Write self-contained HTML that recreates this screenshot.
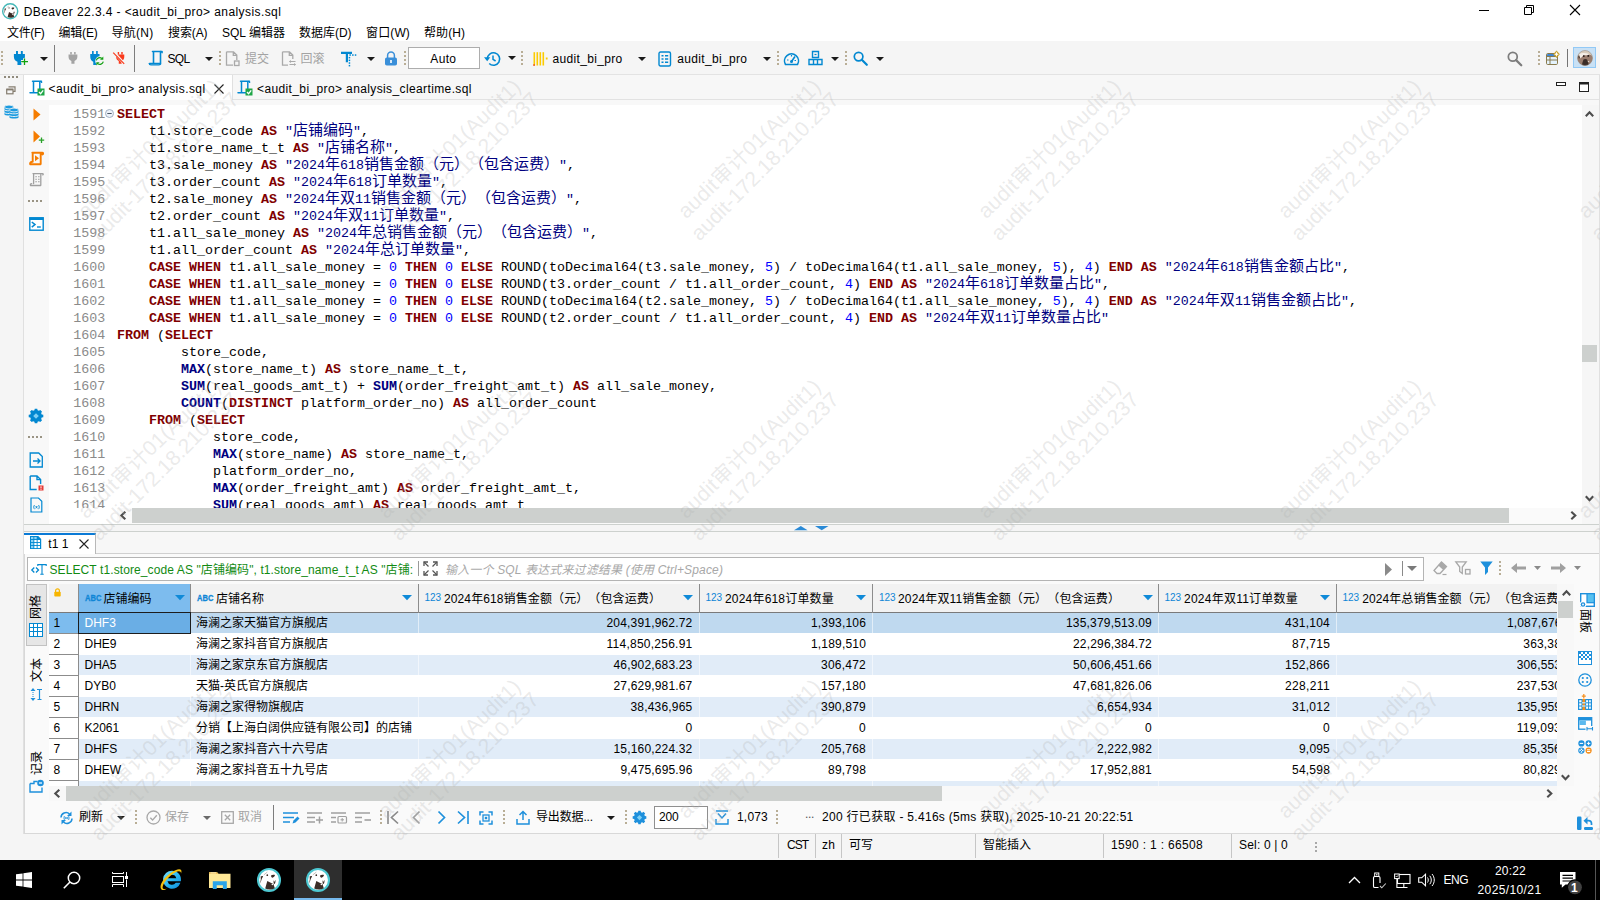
<!DOCTYPE html>
<html lang="zh-CN"><head><meta charset="utf-8"><title>DBeaver 22.3.4 - &lt;audit_bi_pro&gt; analysis.sql</title>
<style>
html,body{margin:0;padding:0;}
body{text-spacing-trim:space-all;width:1600px;height:900px;overflow:hidden;position:relative;background:#f5f5f5;font-family:"Liberation Sans","Noto Sans CJK SC",sans-serif;font-size:12px;color:#000;}
.a{position:absolute;box-sizing:border-box;}
.t{position:absolute;white-space:nowrap;line-height:16px;}
.p{display:inline-block;width:0;height:0;}
svg{position:absolute;overflow:visible;}
svg.wmk{overflow:hidden;pointer-events:none;}
.code{position:absolute;white-space:pre;font-family:"Liberation Mono","Noto Sans CJK SC",monospace;font-size:13.333px;line-height:17px;height:17px;left:117px;color:#000;}
.code .cj{font-family:"Noto Sans CJK SC","Liberation Sans",sans-serif;font-size:15px;line-height:0;}
.code .k{color:#800000;}
.code .f{color:#000080;}
.code .s{color:#000080;}
.code .n{color:#0000ff;}
.ln{position:absolute;font-family:"Liberation Mono",monospace;font-size:13.333px;line-height:17px;height:17px;left:72px;color:#8a8a8a;}
</style></head><body>
<div class="a " style="left:0px;top:0px;width:1600px;height:22px;background:#fff;"></div>
<svg style="left:1.8px;top:2.8px" width="16.4" height="16.4" viewBox="0 0 24 24"><circle cx="12" cy="12" r="11" fill="#fff" stroke="#45b8b8" stroke-width="2.100"/><path d="M3.600 8.600c.8-.9 2-.8 2.500-.2c-.9 1.200-1.300 2.400-1.700 3.700c-.3 1.300-.6 2.500-1.200 3.500c0-1.500.5-2.900.6-4.200c.1-1-.1-1.900-.2-2.800z" fill="#3b2d27"/><path d="M6.800 6.900L10.300 4.100" stroke="#8a807a" stroke-width=".5"/><circle cx="10.300" cy="7.200" r=".85" fill="#3b2d27"/><path d="M14 7.400c1.200-.8 2.900-.9 4-.3c-.3 1.300-1.300 2.500-2.500 2.600c-.9-.3-1.500-1.300-1.500-2.300z" fill="#3b2d27"/><path d="M16.200 11.800l.9 2.300l1.300-2.200c.3 1.400 0 3-.9 4.200l-.7-.4z" fill="#3b2d27"/><path d="M10.300 13.100c1.300.8 2.600 1.400 3.900 1.800l2.200 1l1.400 4.300c-1.600 1-3.300 1.500-5 1.400c-1.700-.1-3.300-.5-4.600-1z" fill="#3b2d27"/><circle cx="15.300" cy="16.400" r=".75" fill="#fff"/></svg>
<svg style="left:1477px;top:3px" width="14" height="14" viewBox="0 0 14 14"><path d="M2 7.500h10" stroke="#000" stroke-width="1" fill="none"/></svg>
<svg style="left:1522px;top:3px" width="14" height="14" viewBox="0 0 14 14"><path d="M2.500 4.500h7v7h-7z M4.500 4.500v-2h7v7h-2" stroke="#000" stroke-width="1" fill="none"/></svg>
<svg style="left:1568px;top:3px" width="14" height="14" viewBox="0 0 14 14"><path d="M2 2l10 10M12 2L2 12" stroke="#000" stroke-width="1.1" fill="none"/></svg>
<div class="a " style="left:0px;top:22px;width:1600px;height:19px;background:#fff;"></div>
<div class="a " style="left:0px;top:41px;width:1600px;height:33px;background:#f5f5f5;"></div>
<div class="a " style="left:0px;top:74px;width:1600px;height:1px;background:#e3e3e3;"></div>
<svg style="left:1px;top:51px" width="2" height="16" viewBox="0 0 2 16"><rect x="0" y="0" width="2" height="2" fill="#b9ae96"/><rect x="0" y="4" width="2" height="2" fill="#b9ae96"/><rect x="0" y="8" width="2" height="2" fill="#b9ae96"/><rect x="0" y="12" width="2" height="2" fill="#b9ae96"/></svg>
<svg style="left:13px;top:50px" width="16" height="16" viewBox="0 0 16 16"><g transform="translate(0.6 1) scale(0.966667 1)"><path d="M2.500 0h2v3.200h-2zM7.500 0h2v3.200h-2z" fill="#0288d1"/><path d="M.3 3h11.400v2.800c0 2.600-1.500 4.300-3.700 4.900V14H4V10.700C1.800 10.100 .3 8.400 .3 5.800z" fill="#0288d1"/></g><path d="M11.500 8.200v6.800M8 11.600h7" stroke="#f5f5f5" stroke-width="3"/><path d="M11.500 8.400v6.600M8.200 11.700h6.800" stroke="#0fa30f" stroke-width="1.300"/></svg>
<svg style="left:40px;top:56.7px" width="8" height="4" viewBox="0 0 8 4"><path d="M0 0h8L4 4z" fill="#1a1a1a"/></svg>
<div class="a " style="left:54px;top:45px;width:1px;height:27px;background:#7d7d7d;"></div>
<svg style="left:65.5px;top:50px" width="16" height="16" viewBox="0 0 16 16"><g transform="translate(2.3 1.9) scale(0.775 0.842857)"><path d="M2.500 0h2v3.200h-2zM7.500 0h2v3.200h-2z" fill="#a3a3a3"/><path d="M.3 3h11.400v2.800c0 2.600-1.500 4.300-3.700 4.900V14H4V10.700C1.800 10.100 .3 8.400 .3 5.800z" fill="#a3a3a3"/></g></svg>
<svg style="left:88px;top:50px" width="16" height="16" viewBox="0 0 16 16"><g transform="translate(2 1) scale(0.816667 1)"><path d="M2.500 0h2v3.200h-2zM7.500 0h2v3.200h-2z" fill="#0288d1"/><path d="M.3 3h11.400v2.800c0 2.600-1.500 4.300-3.700 4.900V14H4V10.700C1.800 10.100 .3 8.400 .3 5.800z" fill="#0288d1"/></g><circle cx="11.800" cy="10.900" r="4.600" fill="#f5f5f5"/><path d="M8.300 10.400a3.500 3.500 0 0 1 5.600-2" stroke="#12a012" stroke-width="1.200" fill="none"/><path d="M15.300 6.400v3.300H12z" fill="#12a012"/><path d="M15.300 11.600a3.500 3.500 0 0 1-5.600 2" stroke="#12a012" stroke-width="1.200" fill="none"/><path d="M8.300 15.600v-3.300h3.300z" fill="#12a012"/></svg>
<svg style="left:111.5px;top:50px" width="16" height="16" viewBox="0 0 16 16"><g transform="translate(3.9 1.9) scale(0.716667 0.842857)"><path d="M2.500 0h2v3.200h-2zM7.500 0h2v3.200h-2z" fill="#f93a1c"/><path d="M.3 3h11.400v2.800c0 2.600-1.500 4.300-3.700 4.900V14H4V10.700C1.800 10.100 .3 8.400 .3 5.800z" fill="#f93a1c"/></g><path d="M1.800 2l10.800 12.200" stroke="#f5f5f5" stroke-width="2.600"/><path d="M1.200 2.600l11 11.200" stroke="#f93a1c" stroke-width="1.200"/></svg>
<div class="a " style="left:134px;top:45px;width:1px;height:27px;background:#7d7d7d;"></div>
<svg style="left:147.5px;top:50px" width="16" height="16" viewBox="0 0 16 16"><path d="M4.500 1.500h9.500M5.500 1.500v11.500M12.500 2v12M1.500 13.500h11" stroke="#0288d1" stroke-width="1.600" fill="none" stroke-linecap="round"/><path d="M12.300 1.500c1.400 0 2 .6 2 1.800" stroke="#0288d1" stroke-width="1.300" fill="none"/><path d="M1.200 13.200c0 1 .6 1.600 1.800 1.600h8c1 0 1.500-.6 1.500-1.600" stroke="#0288d1" stroke-width="1.300" fill="none"/></svg>
<svg style="left:204.5px;top:56.7px" width="8" height="4" viewBox="0 0 8 4"><path d="M0 0h8L4 4z" fill="#1a1a1a"/></svg>
<svg style="left:218.5px;top:51px" width="2" height="16" viewBox="0 0 2 16"><rect x="0" y="0" width="2" height="2" fill="#b9ae96"/><rect x="0" y="4" width="2" height="2" fill="#b9ae96"/><rect x="0" y="8" width="2" height="2" fill="#b9ae96"/><rect x="0" y="12" width="2" height="2" fill="#b9ae96"/></svg>
<svg style="left:225px;top:50.5px" width="16" height="16" viewBox="0 0 16 16"><path d="M1.500 .8h7l3.300 3.300V9M1.500 .8v13.400h6.500M8.300 .8v3.500h3.500" stroke="#a9a9a9" stroke-width="1.300" fill="none"/><rect x="9.500" y="10" width="4.500" height="4.500" fill="none" stroke="#a9a9a9" stroke-width="1.300"/></svg>
<svg style="left:281px;top:50.5px" width="16" height="16" viewBox="0 0 16 16"><path d="M1.500 .8h7l3.300 3.300V8M1.500 .8v13.400h5.500M8.300 .8v3.500h3.500" stroke="#a9a9a9" stroke-width="1.300" fill="none"/><path d="M8.500 10.500h6M8.500 13.500h6" stroke="#a9a9a9" stroke-width="1.200"/><path d="M10 9l-2 1.500l2 1.500zM13 12l2 1.500l-2 1.500z" fill="#a9a9a9"/></svg>
<svg style="left:341px;top:51px" width="16" height="16" viewBox="0 0 16 16"><path d="M0 .7h11v2.200H7V11.200H4.800V2.900H0z" fill="#0288d1"/><rect x="8.4" y="3.300" width="1.500" height="1.500" fill="#0288d1"/><rect x="11.1" y="3.300" width="1.500" height="1.500" fill="#0288d1"/><rect x="13.8" y="3.300" width="1.500" height="1.500" fill="#0288d1"/><rect x="7.700" y="5.9" width="1.500" height="1.500" fill="#0288d1"/><rect x="7.700" y="8.6" width="1.500" height="1.500" fill="#0288d1"/><rect x="7.700" y="11.3" width="1.500" height="1.500" fill="#0288d1"/><rect x="7.700" y="13.9" width="1.500" height="1.500" fill="#0288d1"/></svg>
<svg style="left:366.5px;top:56.7px" width="8" height="4" viewBox="0 0 8 4"><path d="M0 0h8L4 4z" fill="#1a1a1a"/></svg>
<svg style="left:384px;top:50.5px" width="14" height="15" viewBox="0 0 14 15"><path d="M3.600 7V4.500a3.400 3.400 0 0 1 6.800 0V7" stroke="#3a8fd9" stroke-width="1.500" fill="none"/><rect x="1" y="6.500" width="12" height="8" rx="1.800" fill="#3a8fd9"/><rect x="6.200" y="9" width="1.600" height="3" fill="#fff"/></svg>
<svg style="left:404px;top:51px" width="2" height="16" viewBox="0 0 2 16"><rect x="0" y="0" width="2" height="2" fill="#b9ae96"/><rect x="0" y="4" width="2" height="2" fill="#b9ae96"/><rect x="0" y="8" width="2" height="2" fill="#b9ae96"/><rect x="0" y="12" width="2" height="2" fill="#b9ae96"/></svg>
<div class="a " style="left:408px;top:47px;width:72px;height:22px;background:#fff;border:1px solid #adadad;"></div>
<svg style="left:484px;top:50.5px" width="17" height="16" viewBox="0 0 17 16"><path d="M3.300 8A6.200 6.200 0 1 1 5.200 12.500" stroke="#0288d1" stroke-width="1.600" fill="none"/><path d="M0 6.300h6.300L3.200 10.200z" fill="#0288d1"/><path d="M9 4.500V8.300l2.600 1.700" stroke="#0288d1" stroke-width="1.500" fill="none"/></svg>
<svg style="left:507.5px;top:56.2px" width="8" height="4" viewBox="0 0 8 4"><path d="M0 0h8L4 4z" fill="#1a1a1a"/></svg>
<svg style="left:521px;top:51px" width="2" height="16" viewBox="0 0 2 16"><rect x="0" y="0" width="2" height="2" fill="#b9ae96"/><rect x="0" y="4" width="2" height="2" fill="#b9ae96"/><rect x="0" y="8" width="2" height="2" fill="#b9ae96"/><rect x="0" y="12" width="2" height="2" fill="#b9ae96"/></svg>
<svg style="left:532.5px;top:50.5px" width="16" height="16" viewBox="0 0 16 16"><rect x="0.5" y="1.200" width="1.600" height="13.300" fill="#fccb00"/><rect x="3.5" y="1.200" width="1.600" height="13.300" fill="#fccb00"/><rect x="6.5" y="1.200" width="1.600" height="13.300" fill="#fccb00"/><rect x="9.5" y="1.200" width="1.600" height="13.300" fill="#fccb00"/><rect x="12.800" y="6.500" width="1.800" height="2" fill="#fccb00"/><rect x=".3" y="13.300" width="1.500" height="1.500" fill="#f03a17"/></svg>
<svg style="left:637.5px;top:56.7px" width="8" height="4" viewBox="0 0 8 4"><path d="M0 0h8L4 4z" fill="#1a1a1a"/></svg>
<svg style="left:658px;top:50.5px" width="14" height="16" viewBox="0 0 14 16"><rect x="1" y="1" width="11.500" height="14" rx="1.500" fill="none" stroke="#0288d1" stroke-width="1.400"/><path d="M3.500 4.800h2M7 4.800h3.200M3.500 8h2M7 8h3.200M3.500 11.200h2M7 11.200h3.200" stroke="#0288d1" stroke-width="1.400"/></svg>
<svg style="left:762.5px;top:56.7px" width="8" height="4" viewBox="0 0 8 4"><path d="M0 0h8L4 4z" fill="#1a1a1a"/></svg>
<svg style="left:776.5px;top:51px" width="2" height="16" viewBox="0 0 2 16"><rect x="0" y="0" width="2" height="2" fill="#b9ae96"/><rect x="0" y="4" width="2" height="2" fill="#b9ae96"/><rect x="0" y="8" width="2" height="2" fill="#b9ae96"/><rect x="0" y="12" width="2" height="2" fill="#b9ae96"/></svg>
<svg style="left:782.5px;top:51px" width="17" height="15" viewBox="0 0 17 15"><path d="M2.500 13.500A7 7 0 1 1 14.500 13.500z" fill="none" stroke="#0288d1" stroke-width="1.600"/><path d="M8.500 10.500L12 5.500" stroke="#0288d1" stroke-width="1.600"/><circle cx="8.500" cy="10.500" r="1.500" fill="#0288d1"/><path d="M4 9h1.500M8.500 4v1.500M11.500 9.500H13" stroke="#0288d1" stroke-width="1.200"/></svg>
<svg style="left:807.5px;top:50px" width="15" height="16" viewBox="0 0 15 16"><path d="M4.500 1.500h6v6h-6z" fill="none" stroke="#0288d1" stroke-width="1.400"/><path d="M1 14.500V9.500h13v5z M5.500 9.500v5M9.500 9.500v5" fill="none" stroke="#0288d1" stroke-width="1.400"/><path d="M6.500 4.500h2" stroke="#0288d1" stroke-width="1.200"/></svg>
<svg style="left:830.5px;top:56.7px" width="8" height="4" viewBox="0 0 8 4"><path d="M0 0h8L4 4z" fill="#1a1a1a"/></svg>
<svg style="left:844.5px;top:51px" width="2" height="16" viewBox="0 0 2 16"><rect x="0" y="0" width="2" height="2" fill="#b9ae96"/><rect x="0" y="4" width="2" height="2" fill="#b9ae96"/><rect x="0" y="8" width="2" height="2" fill="#b9ae96"/><rect x="0" y="12" width="2" height="2" fill="#b9ae96"/></svg>
<svg style="left:853px;top:51px" width="15" height="15" viewBox="0 0 15 15"><circle cx="5.600" cy="5.600" r="4.300" fill="none" stroke="#0288d1" stroke-width="1.700"/><path d="M8.800 8.800l5 5" stroke="#0288d1" stroke-width="2.200" stroke-linecap="round"/></svg>
<svg style="left:875.5px;top:56.7px" width="8" height="4" viewBox="0 0 8 4"><path d="M0 0h8L4 4z" fill="#1a1a1a"/></svg>
<svg style="left:1507px;top:50.5px" width="15.5" height="15.5" viewBox="0 0 15 15"><circle cx="5.600" cy="5.600" r="4.300" fill="none" stroke="#7d7d7d" stroke-width="1.700"/><path d="M8.800 8.800l5 5" stroke="#7d7d7d" stroke-width="2.200" stroke-linecap="round"/></svg>
<svg style="left:1537.5px;top:51px" width="2" height="16" viewBox="0 0 2 16"><rect x="0" y="0" width="2" height="2" fill="#b9ae96"/><rect x="0" y="4" width="2" height="2" fill="#b9ae96"/><rect x="0" y="8" width="2" height="2" fill="#b9ae96"/><rect x="0" y="12" width="2" height="2" fill="#b9ae96"/></svg>
<svg style="left:1545px;top:50px" width="16" height="16" viewBox="0 0 16 16"><rect x="1.500" y="3.500" width="11" height="11" rx="1.200" fill="#e4f3fd" stroke="#8a7b4e" stroke-width="1"/><path d="M1.500 6.500h11M1.500 10h11M5 6.500v8" stroke="#8a7b4e" stroke-width="1"/><path d="M2 4.800c0-.5.300-.8.800-.8h8.400c.5 0 .8.300.8.800V6H2z" fill="#3f86d2"/><path d="M11.500 .5l3.300 3.700l-3.300 3.700l-3.300-3.700z" fill="#c7a12a"/><path d="M11.500 1.600l.7 1.800l1.700.8l-1.700.8l-.7 1.800l-.7-1.800l-1.700-.8l1.700-.8z" fill="#fff"/></svg>
<div class="a " style="left:1567px;top:49px;width:1px;height:18px;background:#747474;"></div>
<div class="a " style="left:1573px;top:47px;width:23px;height:21px;background:#c9e1f5;border:1px solid #92c9f6;"></div>
<svg style="left:1577px;top:50px" width="16" height="16" viewBox="0 0 16 16"><defs><clipPath id="avc"><circle cx="8" cy="8" r="7.500"/></clipPath></defs><g clip-path="url(#avc)"><rect width="16" height="16" fill="#d8ccbc"/><path d="M0 6.500C2 4.500 4 4 6 5l4-.3c2-.6 4 0 6 1.800V16H0z" fill="#9a7e6f"/><path d="M2 4.500C4.500 2.800 8 2.600 12.500 4.300L10 5.300 6.500 5.200 3.500 8.500z" fill="#f4efe8"/><path d="M6.500 9.500c1-.8 2.500-.8 3.600 0l1.200 3.500c.6 1 .2 2.500-.5 3H6c-.8-1-1-2-.6-3.200z" fill="#3a2c27"/><circle cx="6.800" cy="6.100" r=".9" fill="#1d1512"/><circle cx="11.300" cy="5.900" r=".9" fill="#1d1512"/><path d="M1.200 5.800l1.600 1.200-.8 2z" fill="#2d221e"/><path d="M10.500 11.500l1.500-.5.300 1.300z" fill="#f4efe8"/></g><circle cx="8" cy="8" r="7.500" fill="none" stroke="#8c8177" stroke-width=".5"/></svg>
<div class="a " style="left:0px;top:75px;width:1600px;height:785px;background:#f5f5f5;"></div>
<div class="a " style="left:23px;top:75px;width:1px;height:785px;background:#e0e0e0;"></div>
<svg style="left:4px;top:76px" width="16" height="2" viewBox="0 0 16 2"><rect x="0" y="0" width="2" height="2" fill="#8f8a7c"/><rect x="4" y="0" width="2" height="2" fill="#8f8a7c"/><rect x="8" y="0" width="2" height="2" fill="#8f8a7c"/><rect x="12" y="0" width="2" height="2" fill="#8f8a7c"/></svg>
<svg style="left:6px;top:86px" width="10" height="9" viewBox="0 0 10 9"><path d="M2.500 .8h6.500v4.500h-2" fill="none" stroke="#857d70" stroke-width="1.200"/><rect x=".7" y="3.200" width="6.300" height="4.600" fill="#f5f5f5" stroke="#857d70" stroke-width="1.200"/><path d="M.7 3.600h6.300" stroke="#857d70" stroke-width="1.600"/></svg>
<svg style="left:4px;top:104px" width="16" height="16" viewBox="0 0 16 16"><path d="M0.5 3v7.500c0 1.400 9 1.400 9 0v-7.500" fill="#1b9be0"/><ellipse cx="5.0" cy="3" rx="4.5" ry="1.900" fill="#1b9be0" stroke="#f5f5f5" stroke-width=".8"/><path d="M0.5 5.7c0 1.500 9 1.500 9 0M0.5 8.4c0 1.500 9 1.500 9 0" stroke="#f5f5f5" stroke-width=".9" fill="none"/><path d="M5.5 6v7.500c0 1.400 9 1.400 9 0v-7.500" fill="#1b9be0"/><ellipse cx="10.0" cy="6" rx="4.5" ry="1.900" fill="#1b9be0" stroke="#f5f5f5" stroke-width=".8"/><path d="M5.5 8.7c0 1.500 9 1.500 9 0M5.5 11.4c0 1.500 9 1.500 9 0" stroke="#f5f5f5" stroke-width=".9" fill="none"/></svg>
<div class="a " style="left:24px;top:75px;width:1575px;height:25px;background:#f7f7f7;"></div>
<div class="a " style="left:24px;top:99px;width:1575px;height:1px;background:#e2e2e2;"></div>
<div class="a " style="left:24px;top:75px;width:209px;height:25px;background:#fff;border-right:1px solid #e0e0e0;"></div>
<svg style="left:29px;top:80px" width="16" height="16" viewBox="0 0 16 16"><path d="M3.500 1.300h9M4.500 1.500v10.500M10.800 2v7M1 12.800h8" stroke="#0288d1" stroke-width="1.500" fill="none" stroke-linecap="round"/><path d="M11 1.300c1.200 0 1.800.5 1.800 1.700" stroke="#0288d1" stroke-width="1.200" fill="none"/><rect x="8.500" y="8.500" width="7" height="7" fill="#1fa647"/><path d="M10 12l1.600 1.700l2.600-3.300" stroke="#fff" stroke-width="1.300" fill="none"/></svg>
<svg style="left:214px;top:84px" width="10" height="10" viewBox="0 0 10 10"><path d="M.5 .5l9 9M9.500 .5l-9 9" stroke="#222" stroke-width="1.100"/></svg>
<svg style="left:237px;top:80px" width="16" height="16" viewBox="0 0 16 16"><path d="M3.500 1.300h9M4.500 1.500v10.500M10.800 2v7M1 12.800h8" stroke="#0288d1" stroke-width="1.500" fill="none" stroke-linecap="round"/><path d="M11 1.300c1.200 0 1.800.5 1.800 1.700" stroke="#0288d1" stroke-width="1.200" fill="none"/><rect x="8.500" y="8.500" width="7" height="7" fill="#1fa647"/><path d="M10 12l1.600 1.700l2.600-3.300" stroke="#fff" stroke-width="1.300" fill="none"/></svg>
<svg style="left:1556px;top:82px" width="10" height="4" viewBox="0 0 10 4"><rect x=".5" y=".5" width="9" height="3" fill="#fff" stroke="#222" stroke-width="1"/></svg>
<svg style="left:1579px;top:82px" width="10" height="10" viewBox="0 0 10 10"><rect x=".5" y=".5" width="9" height="9" fill="#fff" stroke="#222" stroke-width="1"/><rect x=".5" y=".5" width="9" height="2" fill="#222"/></svg>
<div class="a " style="left:24px;top:100px;width:1575px;height:5px;background:#f8f8f8;"></div>
<div class="a " style="left:24px;top:105px;width:25px;height:419px;background:#f8f8f8;"></div>
<div class="a " style="left:49px;top:105px;width:1533px;height:403px;background:#fff;"></div>
<div class="a " style="left:49px;top:508px;width:68px;height:16px;background:#fff;"></div>
<svg style="left:32.5px;top:107.5px" width="8" height="13" viewBox="0 0 8 13"><path d="M0.500 0.500l7 6l-7 6z" fill="#f57c00"/></svg>
<svg style="left:32.5px;top:129.5px" width="12" height="14" viewBox="0 0 12 14"><path d="M0.500 0.500l6.500 6l-6.500 6z" fill="#f57c00"/><path d="M8.500 7.500v5.500M5.800 10.200h5.400" stroke="#2aa22a" stroke-width="1.300"/></svg>
<svg style="left:28.5px;top:150.5px" width="16" height="16" viewBox="0 0 16 16"><path d="M3.300 1.700H13.200c1.100 0 1.300 1.300 .3 1.700M3.700 1.700V10.800M11.700 3V13M1.200 13.200H11.500M1.200 13.200c-.4-1.200 .2-2.200 1.500-2.200" stroke="#f57c00" stroke-width="1.900" fill="none" stroke-linecap="round" stroke-linejoin="round"/><path d="M6 4.200l4 3l-4 3z" fill="#f57c00"/></svg>
<svg style="left:28.5px;top:172px" width="16" height="16" viewBox="0 0 16 16"><path d="M4 1.600H13.500c.9 0 1 .9 .3 1.300M4.600 1.600V11.500M11.800 2.500V13.200M1.500 13.500H11.600M1.500 13.500c-.4-1 .1-1.900 1.200-1.900" stroke="#a0a0a0" stroke-width="1.300" fill="none" stroke-linecap="round" stroke-linejoin="round"/><path d="M6.300 4.700h1.600M9 4.700h1.600M6.300 7.200h1.600M9 7.200h1.600M6.300 9.700h1.600M9 9.700h1.600" stroke="#a0a0a0" stroke-width="1.100"/></svg>
<svg style="left:28px;top:200px" width="16" height="2" viewBox="0 0 16 2"><rect x="0" y="0" width="2" height="2" fill="#9a9484"/><rect x="4" y="0" width="2" height="2" fill="#9a9484"/><rect x="8" y="0" width="2" height="2" fill="#9a9484"/><rect x="12" y="0" width="2" height="2" fill="#9a9484"/></svg>
<svg style="left:29px;top:216.5px" width="15" height="14" viewBox="0 0 15 14"><rect x=".8" y=".8" width="13.400" height="12.400" fill="#fff" stroke="#0288d1" stroke-width="1.400"/><rect x=".5" y=".5" width="14" height="2.500" fill="#0288d1"/><path d="M2.800 5l3.200 2.600L2.800 10.200" stroke="#0288d1" stroke-width="1.500" fill="none"/><path d="M8 10h3.800" stroke="#0288d1" stroke-width="1.400"/></svg>
<svg style="left:28px;top:408px" width="16" height="16" viewBox="0 0 16 16"><path d="M15.29 6.75L15.29 9.25L13.69 9.57L13.13 10.91L14.04 12.27L12.27 14.04L10.91 13.13L9.57 13.69L9.25 15.29L6.75 15.29L6.43 13.69L5.09 13.13L3.73 14.04L1.96 12.27L2.87 10.91L2.31 9.57L0.71 9.25L0.71 6.75L2.31 6.43L2.87 5.09L1.96 3.73L3.73 1.96L5.09 2.87L6.43 2.31L6.75 0.71L9.25 0.71L9.57 2.31L10.91 2.87L12.27 1.96L14.04 3.73L13.13 5.09L13.69 6.43z" fill="#0288d1"/><path d="M8 5.200L10.800 8L8 10.800L5.200 8z" fill="#7fd0f5"/></svg>
<svg style="left:28px;top:436px" width="16" height="2" viewBox="0 0 16 2"><rect x="0" y="0" width="2" height="2" fill="#9a9484"/><rect x="4" y="0" width="2" height="2" fill="#9a9484"/><rect x="8" y="0" width="2" height="2" fill="#9a9484"/><rect x="12" y="0" width="2" height="2" fill="#9a9484"/></svg>
<svg style="left:29px;top:452px" width="15" height="16" viewBox="0 0 15 16"><path d="M1.200 1h8.500l3.600 3.600V15H1.200z" fill="none" stroke="#0288d1" stroke-width="1.300"/><path d="M4 9h6.500M8.500 6.500l2.500 2.500l-2.500 2.500" stroke="#0288d1" stroke-width="1.300" fill="none"/></svg>
<svg style="left:29px;top:475px" width="15" height="16" viewBox="0 0 15 16"><path d="M1.200 1h6.800l3.600 3.600V9M1.200 1v13.500h6.500M8 1v3.600h3.600" fill="none" stroke="#0288d1" stroke-width="1.400"/><rect x="9.500" y="10.500" width="5" height="5" fill="#e53935"/><rect x="11.500" y="11.300" width="1" height="2" fill="#fff"/><rect x="11.500" y="13.800" width="1" height="1" fill="#fff"/></svg>
<svg style="left:30px;top:497px" width="13" height="16" viewBox="0 0 13 16"><path d="M1 1h7.500l3.300 3.300V15H1z" fill="none" stroke="#0288d1" stroke-width="1.200"/><path d="M4.500 8c-1 1.200-1 3 0 4.200M8.500 8c1 1.200 1 3 0 4.200M5.700 9l1.600 2.400M7.300 9l-1.600 2.400" stroke="#0288d1" stroke-width=".9" fill="none"/></svg>
<div class="a" style="left:49px;top:105px;width:1533px;height:402.5px;overflow:hidden;">
<div class="ln" style="left:24.2px;top:0.5px">1591</div>
<div class="code" style="left:68px;top:0.5px"><b class="k">SELECT</b></div>
<div class="ln" style="left:24.2px;top:17.5px">1592</div>
<div class="code" style="left:68px;top:17.5px">    t1.store_code <b class="k">AS</b> <span class="s">"<span class="cj">店铺编码</span>"</span>,</div>
<div class="ln" style="left:24.2px;top:34.5px">1593</div>
<div class="code" style="left:68px;top:34.5px">    t1.store_name_t_t <b class="k">AS</b> <span class="s">"<span class="cj">店铺名称</span>"</span>,</div>
<div class="ln" style="left:24.2px;top:51.5px">1594</div>
<div class="code" style="left:68px;top:51.5px">    t3.sale_money <b class="k">AS</b> <span class="s">"2024<span class="cj">年</span>618<span class="cj">销售金额（元）（包含运费）</span>"</span>,</div>
<div class="ln" style="left:24.2px;top:68.5px">1595</div>
<div class="code" style="left:68px;top:68.5px">    t3.order_count <b class="k">AS</b> <span class="s">"2024<span class="cj">年</span>618<span class="cj">订单数量</span>"</span>,</div>
<div class="ln" style="left:24.2px;top:85.5px">1596</div>
<div class="code" style="left:68px;top:85.5px">    t2.sale_money <b class="k">AS</b> <span class="s">"2024<span class="cj">年双</span>11<span class="cj">销售金额（元）（包含运费）</span>"</span>,</div>
<div class="ln" style="left:24.2px;top:102.5px">1597</div>
<div class="code" style="left:68px;top:102.5px">    t2.order_count <b class="k">AS</b> <span class="s">"2024<span class="cj">年双</span>11<span class="cj">订单数量</span>"</span>,</div>
<div class="ln" style="left:24.2px;top:119.5px">1598</div>
<div class="code" style="left:68px;top:119.5px">    t1.all_sale_money <b class="k">AS</b> <span class="s">"2024<span class="cj">年总销售金额（元）（包含运费）</span>"</span>,</div>
<div class="ln" style="left:24.2px;top:136.5px">1599</div>
<div class="code" style="left:68px;top:136.5px">    t1.all_order_count <b class="k">AS</b> <span class="s">"2024<span class="cj">年总订单数量</span>"</span>,</div>
<div class="ln" style="left:24.2px;top:153.5px">1600</div>
<div class="code" style="left:68px;top:153.5px">    <b class="k">CASE</b> <b class="k">WHEN</b> t1.all_sale_money = <span class="n">0</span> <b class="k">THEN</b> <span class="n">0</span> <b class="k">ELSE</b> ROUND(toDecimal64(t3.sale_money, <span class="n">5</span>) / toDecimal64(t1.all_sale_money, <span class="n">5</span>), <span class="n">4</span>) <b class="k">END</b> <b class="k">AS</b> <span class="s">"2024<span class="cj">年</span>618<span class="cj">销售金额占比</span>"</span>,</div>
<div class="ln" style="left:24.2px;top:170.5px">1601</div>
<div class="code" style="left:68px;top:170.5px">    <b class="k">CASE</b> <b class="k">WHEN</b> t1.all_sale_money = <span class="n">0</span> <b class="k">THEN</b> <span class="n">0</span> <b class="k">ELSE</b> ROUND(t3.order_count / t1.all_order_count, <span class="n">4</span>) <b class="k">END</b> <b class="k">AS</b> <span class="s">"2024<span class="cj">年</span>618<span class="cj">订单数量占比</span>"</span>,</div>
<div class="ln" style="left:24.2px;top:187.5px">1602</div>
<div class="code" style="left:68px;top:187.5px">    <b class="k">CASE</b> <b class="k">WHEN</b> t1.all_sale_money = <span class="n">0</span> <b class="k">THEN</b> <span class="n">0</span> <b class="k">ELSE</b> ROUND(toDecimal64(t2.sale_money, <span class="n">5</span>) / toDecimal64(t1.all_sale_money, <span class="n">5</span>), <span class="n">4</span>) <b class="k">END</b> <b class="k">AS</b> <span class="s">"2024<span class="cj">年双</span>11<span class="cj">销售金额占比</span>"</span>,</div>
<div class="ln" style="left:24.2px;top:204.5px">1603</div>
<div class="code" style="left:68px;top:204.5px">    <b class="k">CASE</b> <b class="k">WHEN</b> t1.all_sale_money = <span class="n">0</span> <b class="k">THEN</b> <span class="n">0</span> <b class="k">ELSE</b> ROUND(t2.order_count / t1.all_order_count, <span class="n">4</span>) <b class="k">END</b> <b class="k">AS</b> <span class="s">"2024<span class="cj">年双</span>11<span class="cj">订单数量占比</span>"</span></div>
<div class="ln" style="left:24.2px;top:221.5px">1604</div>
<div class="code" style="left:68px;top:221.5px"><b class="k">FROM</b> (<b class="k">SELECT</b></div>
<div class="ln" style="left:24.2px;top:238.5px">1605</div>
<div class="code" style="left:68px;top:238.5px">        store_code,</div>
<div class="ln" style="left:24.2px;top:255.5px">1606</div>
<div class="code" style="left:68px;top:255.5px">        <b class="f">MAX</b>(store_name_t) <b class="k">AS</b> store_name_t_t,</div>
<div class="ln" style="left:24.2px;top:272.5px">1607</div>
<div class="code" style="left:68px;top:272.5px">        <b class="f">SUM</b>(real_goods_amt_t) + <b class="f">SUM</b>(order_freight_amt_t) <b class="k">AS</b> all_sale_money,</div>
<div class="ln" style="left:24.2px;top:289.5px">1608</div>
<div class="code" style="left:68px;top:289.5px">        <b class="f">COUNT</b>(<b class="k">DISTINCT</b> platform_order_no) <b class="k">AS</b> all_order_count</div>
<div class="ln" style="left:24.2px;top:306.5px">1609</div>
<div class="code" style="left:68px;top:306.5px">    <b class="k">FROM</b> (<b class="k">SELECT</b></div>
<div class="ln" style="left:24.2px;top:323.5px">1610</div>
<div class="code" style="left:68px;top:323.5px">            store_code,</div>
<div class="ln" style="left:24.2px;top:340.5px">1611</div>
<div class="code" style="left:68px;top:340.5px">            <b class="f">MAX</b>(store_name) <b class="k">AS</b> store_name_t,</div>
<div class="ln" style="left:24.2px;top:357.5px">1612</div>
<div class="code" style="left:68px;top:357.5px">            platform_order_no,</div>
<div class="ln" style="left:24.2px;top:374.5px">1613</div>
<div class="code" style="left:68px;top:374.5px">            <b class="f">MAX</b>(order_freight_amt) <b class="k">AS</b> order_freight_amt_t,</div>
<div class="ln" style="left:24.2px;top:391.5px">1614</div>
<div class="code" style="left:68px;top:391.5px">            <b class="f">SUM</b>(real_goods_amt) <b class="k">AS</b> real_goods_amt_t</div>
</div>
<svg style="left:105px;top:108.5px" width="9" height="9" viewBox="0 0 9 9"><circle cx="4.500" cy="4.500" r="4" fill="#ecf2f9" stroke="#9aa9bc" stroke-width=".9"/><path d="M2.300 4.500h4.400" stroke="#4a5666" stroke-width="1"/></svg>
<div class="a " style="left:1582px;top:105px;width:17px;height:403px;background:#f6f6f6;"></div>
<svg style="left:1585px;top:109.5px" width="9" height="9" viewBox="0 0 9 9"><path d="M.8 6.300L4.500 2.300L8.200 6.300" stroke="#4d4d4d" stroke-width="2.100" fill="none"/></svg>
<svg style="left:1585px;top:493.5px" width="9" height="9" viewBox="0 0 9 9"><path d="M.8 2.300L4.500 6.300L8.200 2.300" stroke="#4d4d4d" stroke-width="2.100" fill="none"/></svg>
<div class="a " style="left:1582px;top:345px;width:15px;height:17px;background:#cdd0ce;"></div>
<div class="a " style="left:117px;top:508px;width:1465px;height:16px;background:#fafafa;"></div>
<svg style="left:119px;top:511px" width="9" height="9" viewBox="0 0 9 9"><path d="M6.300 .8L2.300 4.500L6.300 8.200" stroke="#4d4d4d" stroke-width="2.100" fill="none"/></svg>
<svg style="left:1569px;top:511px" width="9" height="9" viewBox="0 0 9 9"><path d="M2.300 .8L6.300 4.500L2.300 8.200" stroke="#4d4d4d" stroke-width="2.100" fill="none"/></svg>
<div class="a " style="left:132px;top:508px;width:1377px;height:15px;background:#cdd0ce;"></div>
<div class="a " style="left:1582px;top:508px;width:17px;height:16px;background:#f6f6f6;"></div>
<div class="a " style="left:1599px;top:75px;width:1px;height:785px;background:#e0e0e0;"></div>
<div class="a " style="left:24px;top:524px;width:1575px;height:1px;background:#cdd1ce;"></div>
<div class="a " style="left:24px;top:525px;width:1575px;height:7px;background:#f5f5f5;"></div>
<svg style="left:793.7px;top:525.8px" width="35" height="5" viewBox="0 0 35 5"><path d="M0 4.300L6.800 0l6.800 4.300z" fill="#2a8ad6"/><path d="M21 0h13.500l-6.750 4.300z" fill="#2a8ad6"/></svg>
<div class="a " style="left:24px;top:531px;width:1575px;height:1px;background:#cdd1ce;"></div>
<div class="a " style="left:24px;top:532px;width:1575px;height:22px;background:#f7f7f7;"></div>
<div class="a " style="left:24px;top:553px;width:1575px;height:1px;background:#d0d0d0;"></div>
<div class="a " style="left:24px;top:533px;width:72px;height:21px;background:#fff;border-top:2px solid #0a7ad6;border-right:1px solid #b8b8b8;"></div>
<svg style="left:30px;top:536px" width="12" height="13" viewBox="0 0 12 13"><path d="M0 0h8.300L11.200 2.900V13H0z" fill="#0288d1"/><rect x="1" y="1" width="2.400" height="2.100" fill="#8fd4f6"/><rect x="4.3" y="1" width="2.400" height="2.100" fill="#8fd4f6"/><rect x="1" y="4" width="2.400" height="2.100" fill="#8fd4f6"/><rect x="4.3" y="4" width="2.400" height="2.100" fill="#fff"/><rect x="7.6" y="4" width="2.400" height="2.100" fill="#fff"/><rect x="1" y="7" width="2.400" height="2.100" fill="#8fd4f6"/><rect x="4.3" y="7" width="2.400" height="2.100" fill="#fff"/><rect x="7.6" y="7" width="2.400" height="2.100" fill="#fff"/><rect x="1" y="10" width="2.400" height="2.100" fill="#8fd4f6"/><rect x="4.3" y="10" width="2.400" height="2.100" fill="#fff"/><rect x="7.6" y="10" width="2.400" height="2.100" fill="#fff"/></svg>
<svg style="left:79px;top:539px" width="10" height="10" viewBox="0 0 10 10"><path d="M.5 .5l9 9M9.500 .5l-9 9" stroke="#222" stroke-width="1.100"/></svg>
<div class="a " style="left:24px;top:554px;width:1575px;height:280px;background:#fafafa;"></div>
<div class="a " style="left:24px;top:554px;width:1px;height:280px;background:#d8d8d8;"></div>
<div class="a " style="left:24px;top:833px;width:1575px;height:1px;background:#d8d8d8;"></div>
<div class="a " style="left:27px;top:557px;width:1397px;height:24px;background:#fff;border:1px solid #b4b4b4;"></div>
<svg style="left:30.8px;top:563.7px" width="16" height="11" viewBox="0 0 16 11"><path d="M3.300 3.500L.8 6l2.500 2.500M5 3.500L7.500 6L5 8.500" stroke="#0288d1" stroke-width="1.300" fill="none"/><path d="M6.800 2V.6h8.400V2M11 .6V10.200M9.300 10.300h3.400" stroke="#0288d1" stroke-width="1.100" fill="none"/></svg>
<div class="a " style="left:418px;top:561px;width:1px;height:15px;background:#9a9a9a;"></div>
<svg style="left:423px;top:561px" width="15" height="15" viewBox="0 0 15 15"><path d="M1 5V1h4M10 1h4v4M14 10v4h-4M5 14H1v-4" stroke="#555" stroke-width="1.300" fill="none"/><path d="M1 1l4.500 4.500M14 1L9.500 5.500M14 14L9.500 9.500M1 14l4.500-4.500" stroke="#555" stroke-width="1.200"/></svg>
<svg style="left:1384.5px;top:562.5px" width="7" height="13" viewBox="0 0 7 13"><path d="M0 0l7 6.500L0 13z" fill="#8a8a8a"/></svg>
<div class="a " style="left:1402px;top:561px;width:1px;height:15px;background:#8a8a8a;"></div>
<svg style="left:1407px;top:566px" width="10" height="5" viewBox="0 0 10 5"><path d="M0 0h10 L5 5z" fill="#7a7a7a"/></svg>
<svg style="left:1433px;top:561px" width="15" height="14" viewBox="0 0 15 14"><path d="M8.500 1l5 4.500l-6.500 7H4L1 9.500z" fill="none" stroke="#a8a8a8" stroke-width="1.300"/><path d="M8.500 1l5 4.500l-3.200 3.500l-5-4.500z" fill="#a8a8a8"/><path d="M9.500 13.500h4" stroke="#a8a8a8" stroke-width="1.200"/></svg>
<svg style="left:1455px;top:561px" width="16" height="14" viewBox="0 0 16 14"><path d="M.8 .8h10.400L7.300 6v6.500L4.700 10.500V6z" fill="none" stroke="#a8a8a8" stroke-width="1.300"/><rect x="10.500" y="8.500" width="4.500" height="4.500" fill="none" stroke="#a8a8a8" stroke-width="1.300"/></svg>
<svg style="left:1479.5px;top:561px" width="13" height="14" viewBox="0 0 13 14"><path d="M.3 .5h12.400L8 6.500V11L5 14V6.500z" fill="#1e90dc"/></svg>
<svg style="left:1499px;top:561px" width="2" height="16" viewBox="0 0 2 16"><rect x="0" y="0" width="2" height="2" fill="#b9ae96"/><rect x="0" y="4" width="2" height="2" fill="#b9ae96"/><rect x="0" y="8" width="2" height="2" fill="#b9ae96"/><rect x="0" y="12" width="2" height="2" fill="#b9ae96"/></svg>
<svg style="left:1510.5px;top:563px" width="15" height="10" viewBox="0 0 15 10"><path d="M0 5L6 0v3.500h9v3H6V10z" fill="#a0a0a0"/></svg>
<svg style="left:1534px;top:566px" width="7" height="4" viewBox="0 0 7 4"><path d="M0 0h7 L3.5 4z" fill="#8a8a8a"/></svg>
<svg style="left:1550.5px;top:563px" width="15" height="10" viewBox="0 0 15 10"><path d="M15 5L9 0v3.500H0v3h9V10z" fill="#a0a0a0"/></svg>
<svg style="left:1574px;top:566px" width="7" height="4" viewBox="0 0 7 4"><path d="M0 0h7 L3.5 4z" fill="#8a8a8a"/></svg>
<div class="a " style="left:26px;top:584px;width:21px;height:62px;background:#e6e6e6;border:1px solid #c2c2c2;"></div>
<div class="a" style="left:29px;top:619px;width:26px;height:14px;line-height:14px;font-size:12px;white-space:nowrap;transform-origin:0 0;transform:rotate(-90deg);">网格</div>
<svg style="left:29px;top:623px" width="14" height="14" viewBox="0 0 14 14"><rect x=".5" y=".5" width="13" height="13" fill="#fff" stroke="#0288d1" stroke-width="1"/><path d="M4.500 .5v13M8.500 .5v13M.5 4.500h13M.5 8.500h13" stroke="#0288d1" stroke-width="1"/></svg>
<div class="a" style="left:29.5px;top:682px;width:26px;height:14px;line-height:14px;font-size:12px;white-space:nowrap;transform-origin:0 0;transform:rotate(-90deg);">文本</div>
<svg style="left:30px;top:687.5px" width="12" height="13" viewBox="0 0 12 13"><path d="M3 0l2.500 3h-5zM3 13l2.500-3h-5z" fill="#1e90dc"/><path d="M3 4v5" stroke="#1e90dc" stroke-width="1" stroke-dasharray="1 1"/><path d="M7 1.500h5M9.500 1.500v10M7.500 11.500h4" stroke="#1e90dc" stroke-width="1.200" fill="none"/></svg>
<div class="a" style="left:29.5px;top:775px;width:26px;height:14px;line-height:14px;font-size:12px;white-space:nowrap;transform-origin:0 0;transform:rotate(-90deg);">记录</div>
<svg style="left:29px;top:778.5px" width="15" height="14" viewBox="0 0 15 14"><path d="M1 4.500h4v-2h3.500M1 4.500v8.500h12V8.500" fill="none" stroke="#1e90dc" stroke-width="1.400"/><circle cx="11.500" cy="4" r="3.300" fill="#1e90dc"/><rect x="10" y="3.400" width="3" height="1.200" fill="#fff"/></svg>
<div class="a " style="left:49px;top:584px;width:1508px;height:202px;background:#fff;"></div>
<div class="a " style="left:49px;top:584px;width:1508px;height:28px;background:#f2f2f2;"></div>
<div class="a " style="left:78px;top:584px;width:112px;height:28px;background:#7dbcee;"></div>
<div class="a " style="left:49px;top:612px;width:1508px;height:1px;background:#7a7a7a;"></div>
<div class="a " style="left:78px;top:584px;width:1px;height:29px;background:#8c8c8c;"></div>
<div class="a " style="left:190px;top:584px;width:1px;height:29px;background:#8c8c8c;"></div>
<div class="a " style="left:418px;top:584px;width:1px;height:29px;background:#8c8c8c;"></div>
<div class="a " style="left:699px;top:584px;width:1px;height:29px;background:#8c8c8c;"></div>
<div class="a " style="left:872px;top:584px;width:1px;height:29px;background:#8c8c8c;"></div>
<div class="a " style="left:1158px;top:584px;width:1px;height:29px;background:#8c8c8c;"></div>
<div class="a " style="left:1336px;top:584px;width:1px;height:29px;background:#8c8c8c;"></div>
<svg style="left:53.5px;top:588px" width="7" height="9" viewBox="0 0 7 9"><path d="M1.600 4V2.800a1.900 1.900 0 0 1 3.800 0V4" stroke="#f7b500" stroke-width="1.200" fill="none"/><rect x=".3" y="3.800" width="6.400" height="4.800" rx=".8" fill="#f7b500"/></svg>
<div class="a " style="left:78px;top:613px;width:1479px;height:20px;background:#bfd9ef;"></div>
<div class="a " style="left:49px;top:613px;width:29px;height:20px;background:#7dbcee;"></div>
<div class="a " style="left:49px;top:633px;width:29px;height:1px;background:#8c8c8c;"></div>
<div class="a " style="left:49px;top:654px;width:29px;height:1px;background:#8c8c8c;"></div>
<div class="a " style="left:78px;top:655px;width:1479px;height:20px;background:#e1ecf8;"></div>
<div class="a " style="left:49px;top:675px;width:29px;height:1px;background:#8c8c8c;"></div>
<div class="a " style="left:49px;top:696px;width:29px;height:1px;background:#8c8c8c;"></div>
<div class="a " style="left:78px;top:697px;width:1479px;height:20px;background:#e1ecf8;"></div>
<div class="a " style="left:49px;top:717px;width:29px;height:1px;background:#8c8c8c;"></div>
<div class="a " style="left:49px;top:738px;width:29px;height:1px;background:#8c8c8c;"></div>
<div class="a " style="left:78px;top:739px;width:1479px;height:20px;background:#e1ecf8;"></div>
<div class="a " style="left:49px;top:759px;width:29px;height:1px;background:#8c8c8c;"></div>
<div class="a " style="left:49px;top:780px;width:29px;height:1px;background:#8c8c8c;"></div>
<div class="a " style="left:78px;top:781px;width:1479px;height:5px;background:#e1ecf8;"></div>
<div class="a " style="left:78px;top:613px;width:1px;height:173px;background:#8c8c8c;"></div>
<div class="a " style="left:190px;top:613px;width:1px;height:173px;background:rgba(255,255,255,.55);"></div>
<div class="a " style="left:418px;top:613px;width:1px;height:173px;background:rgba(255,255,255,.55);"></div>
<div class="a " style="left:699px;top:613px;width:1px;height:173px;background:rgba(255,255,255,.55);"></div>
<div class="a " style="left:872px;top:613px;width:1px;height:173px;background:rgba(255,255,255,.55);"></div>
<div class="a " style="left:1158px;top:613px;width:1px;height:173px;background:rgba(255,255,255,.55);"></div>
<div class="a " style="left:1336px;top:613px;width:1px;height:173px;background:rgba(255,255,255,.55);"></div>
<div class="a " style="left:78px;top:612px;width:113px;height:22px;background:#6aaee5;border:1px solid #1c1c1c;"></div>
<svg style="left:175px;top:595.3px" width="10" height="5.2" viewBox="0 0 10 5.2"><path d="M0 0h10 L5 5.2z" fill="#0f8ad8"/></svg>
<svg style="left:402px;top:595.3px" width="10" height="5.2" viewBox="0 0 10 5.2"><path d="M0 0h10 L5 5.2z" fill="#0f8ad8"/></svg>
<svg style="left:683px;top:595.3px" width="10" height="5.2" viewBox="0 0 10 5.2"><path d="M0 0h10 L5 5.2z" fill="#0f8ad8"/></svg>
<svg style="left:856px;top:595.3px" width="10" height="5.2" viewBox="0 0 10 5.2"><path d="M0 0h10 L5 5.2z" fill="#0f8ad8"/></svg>
<svg style="left:1143px;top:595.3px" width="10" height="5.2" viewBox="0 0 10 5.2"><path d="M0 0h10 L5 5.2z" fill="#0f8ad8"/></svg>
<svg style="left:1320px;top:595.3px" width="10" height="5.2" viewBox="0 0 10 5.2"><path d="M0 0h10 L5 5.2z" fill="#0f8ad8"/></svg>
<div class="a " style="left:1557px;top:584px;width:17px;height:202px;background:#f8f8f8;"></div>
<svg style="left:1561.5px;top:588.5px" width="9" height="9" viewBox="0 0 9 9"><path d="M.8 6.300L4.500 2.300L8.200 6.300" stroke="#4d4d4d" stroke-width="2.100" fill="none"/></svg>
<svg style="left:1561px;top:773px" width="9" height="9" viewBox="0 0 9 9"><path d="M.8 2.300L4.500 6.300L8.200 2.300" stroke="#4d4d4d" stroke-width="2.100" fill="none"/></svg>
<div class="a " style="left:1558px;top:601px;width:15px;height:17px;background:#cdd0ce;"></div>
<div class="a " style="left:49px;top:786px;width:1508px;height:15px;background:#f8f8f8;"></div>
<svg style="left:52.5px;top:788.5px" width="9" height="9" viewBox="0 0 9 9"><path d="M6.300 .8L2.300 4.500L6.300 8.200" stroke="#4d4d4d" stroke-width="2.100" fill="none"/></svg>
<svg style="left:1545px;top:788.5px" width="9" height="9" viewBox="0 0 9 9"><path d="M2.300 .8L6.300 4.500L2.300 8.200" stroke="#4d4d4d" stroke-width="2.100" fill="none"/></svg>
<div class="a " style="left:66px;top:786px;width:876px;height:15px;background:#cdd0ce;"></div>
<svg style="left:1579.5px;top:593px" width="15" height="15" viewBox="0 0 15 15"><rect x=".7" y=".7" width="13.600" height="12.600" fill="#fff" stroke="#1e90dc" stroke-width="1.400"/><rect x="7" y=".7" width="7.300" height="9" fill="#57c1f0" stroke="#1e90dc" stroke-width="1.200"/><circle cx="3" cy="11.500" r="3.200" fill="#fff"/><circle cx="3" cy="11.500" r="2.300" fill="#1e90dc"/><circle cx="3" cy="11.500" r=".9" fill="#fff"/></svg>
<div class="a" style="left:1592.3px;top:609px;width:26px;height:14px;line-height:14px;font-size:12px;white-space:nowrap;transform-origin:0 0;transform:rotate(90deg);">面板</div>
<svg style="left:1578px;top:651px" width="14" height="14" viewBox="0 0 14 14"><rect x=".5" y=".5" width="13" height="13" fill="#fff" stroke="#1e90dc" stroke-width="1"/><rect x="1" y="1" width="2" height="2" fill="#1e90dc"/><rect x="1" y="5" width="2" height="2" fill="#1e90dc"/><rect x="3" y="3" width="2" height="2" fill="#1e90dc"/><rect x="3" y="7" width="2" height="2" fill="#1e90dc"/><rect x="5" y="1" width="2" height="2" fill="#1e90dc"/><rect x="5" y="5" width="2" height="2" fill="#1e90dc"/><rect x="7" y="3" width="2" height="2" fill="#1e90dc"/><rect x="7" y="7" width="2" height="2" fill="#1e90dc"/><rect x="9" y="1" width="2" height="2" fill="#1e90dc"/><rect x="9" y="5" width="2" height="2" fill="#1e90dc"/><rect x="11" y="3" width="2" height="2" fill="#1e90dc"/><rect x="11" y="7" width="2" height="2" fill="#1e90dc"/></svg>
<svg style="left:1578px;top:673px" width="14" height="14" viewBox="0 0 14 14"><circle cx="7" cy="7" r="6.200" fill="none" stroke="#1e90dc" stroke-width="1.300"/><circle cx="4.800" cy="5" r="1.100" fill="#1e90dc"/><circle cx="9.200" cy="5" r="1.100" fill="#1e90dc"/><circle cx="4.800" cy="9" r="1.100" fill="#1e90dc"/><circle cx="9.200" cy="9" r="1.100" fill="#1e90dc"/></svg>
<svg style="left:1578px;top:694px" width="14" height="16" viewBox="0 0 14 16"><rect x=".6" y="5.600" width="12.800" height="9.800" fill="#fff" stroke="#1e90dc" stroke-width="1.200"/><rect x="4" y="5" width="3.600" height="11" fill="#f5901e"/><path d="M.6 8.800h12.800M.6 12h12.800M4 5.600v9.800M7.600 5.600v9.800M10.600 5.600v9.800" stroke="#1e90dc" stroke-width="1"/><path d="M4 8.800h3.600M4 12h3.600" stroke="#fff" stroke-width="1"/><path d="M5.800 0v4.500M3.800 2.200h4" stroke="#f5901e" stroke-width="1.200"/></svg>
<svg style="left:1578px;top:717px" width="15" height="15" viewBox="0 0 15 15"><rect x=".7" y=".7" width="13" height="11.500" fill="#fff" stroke="#1e90dc" stroke-width="1.300"/><rect x=".7" y=".7" width="13" height="2.800" fill="#1e90dc"/><rect x="1.400" y="3.500" width="6.500" height="4.500" fill="#5bb9ee"/><rect x="7.500" y="9" width="7.500" height="5" fill="#fafafa"/><path d="M9 11.800h5.500M9 10v3.600M14.500 10v3.600" stroke="#1e90dc" stroke-width="1.100"/></svg>
<svg style="left:1578px;top:739.5px" width="14" height="14" viewBox="0 0 14 14"><circle cx="3.400" cy="3.400" r="3.100" fill="#1e90dc"/><path d="M1.700 3.400h3.400" stroke="#fff" stroke-width="1.100"/><circle cx="10.600" cy="3.400" r="3.100" fill="#1e90dc"/><path d="M8.900 3.400h3.400M10.600 1.700v3.400" stroke="#fff" stroke-width="1"/><circle cx="3.400" cy="10.600" r="2.600" fill="#fff" stroke="#1e90dc" stroke-width="1.100"/><path d="M2 9.200l2.800 2.800M4.800 9.200L2 12" stroke="#1e90dc" stroke-width="1"/><circle cx="10.600" cy="10.600" r="3.100" fill="#f5901e"/><path d="M9 9.800h3.200M9 11.500h3.200" stroke="#fff" stroke-width="1"/></svg>
<svg style="left:1577px;top:816px" width="16" height="14" viewBox="0 0 16 14"><rect x="0" y=".5" width="4.500" height="13.500" rx="1.200" fill="#1e90dc"/><path d="M14.500 9V7.500c0-1.700-1-2.800-2.800-2.800H9" stroke="#1e90dc" stroke-width="1.700" fill="none"/><path d="M10.500 1l-4 3.700l4 3.700z" fill="#1e90dc"/><rect x="7" y="11" width="9" height="3" rx="1.200" fill="#1e90dc"/></svg>
<svg style="left:59px;top:810.5px" width="15" height="14" viewBox="0 0 15 14"><path d="M2 6.500A5 5 0 0 1 10.500 3" stroke="#1e90dc" stroke-width="1.500" fill="none"/><path d="M12.500 .5v4.500H8z" fill="#1e90dc"/><path d="M13 7.500A5 5 0 0 1 4.500 11" stroke="#1e90dc" stroke-width="1.500" fill="none"/><path d="M2.500 13.500V9H7z" fill="#1e90dc"/><path d="M5 5.500l2.500 1.500l-2.500 1.500zM10 5.500L7.500 7l2.500 1.500z" fill="none" stroke="#1e90dc" stroke-width=".8"/></svg>
<svg style="left:117px;top:816px" width="8" height="4" viewBox="0 0 8 4"><path d="M0 0h8 L4 4z" fill="#1a1a1a"/></svg>
<svg style="left:134.5px;top:810px" width="2" height="16" viewBox="0 0 2 16"><rect x="0" y="0" width="2" height="2" fill="#b9ae96"/><rect x="0" y="4" width="2" height="2" fill="#b9ae96"/><rect x="0" y="8" width="2" height="2" fill="#b9ae96"/><rect x="0" y="12" width="2" height="2" fill="#b9ae96"/></svg>
<svg style="left:145.5px;top:810px" width="15" height="15" viewBox="0 0 15 15"><circle cx="7.500" cy="7.500" r="6.500" fill="none" stroke="#a8a8a8" stroke-width="1.300"/><path d="M4.300 7.800l2.300 2.300l4.200-4.800" stroke="#a8a8a8" stroke-width="1.400" fill="none"/></svg>
<svg style="left:203px;top:816px" width="8" height="4" viewBox="0 0 8 4"><path d="M0 0h8 L4 4z" fill="#6a6a6a"/></svg>
<svg style="left:220.5px;top:811px" width="13" height="13" viewBox="0 0 13 13"><rect x=".7" y=".7" width="11.600" height="11.600" fill="none" stroke="#a8a8a8" stroke-width="1.300"/><path d="M3.800 3.800l5.400 5.400M9.200 3.800L3.800 9.200" stroke="#a8a8a8" stroke-width="1.300"/></svg>
<div class="a " style="left:273px;top:805px;width:1px;height:25px;background:#7d7d7d;"></div>
<svg style="left:283px;top:811px" width="17" height="14" viewBox="0 0 17 14"><path d="M0 2h15M0 6.500h11M0 11h7" stroke="#1e90dc" stroke-width="1.700"/><path d="M9.500 12.500l1-3l4-4l2 2l-4 4z" fill="#1e90dc"/></svg>
<svg style="left:307px;top:811px" width="17" height="14" viewBox="0 0 17 14"><path d="M0 2h15M0 6.500h8M0 11h8" stroke="#a0a0a0" stroke-width="1.600"/><path d="M12.500 5.500v7M9 9h7" stroke="#a0a0a0" stroke-width="1.500"/></svg>
<svg style="left:331px;top:811px" width="17" height="14" viewBox="0 0 17 14"><path d="M0 2h15M0 6.500h5M0 11h5" stroke="#a0a0a0" stroke-width="1.600"/><rect x="7" y="5.500" width="8.500" height="6.500" rx="1" fill="none" stroke="#a0a0a0" stroke-width="1.200"/><path d="M11.200 7v3.500M9.500 8.800h3.500" stroke="#a0a0a0" stroke-width="1"/></svg>
<svg style="left:355px;top:811px" width="17" height="14" viewBox="0 0 17 14"><path d="M0 2h15M0 6.500h7M0 11h7" stroke="#a0a0a0" stroke-width="1.600"/><path d="M9.500 9h6.500" stroke="#a0a0a0" stroke-width="1.600"/></svg>
<svg style="left:379.5px;top:810px" width="2" height="16" viewBox="0 0 2 16"><rect x="0" y="0" width="2" height="2" fill="#b9ae96"/><rect x="0" y="4" width="2" height="2" fill="#b9ae96"/><rect x="0" y="8" width="2" height="2" fill="#b9ae96"/><rect x="0" y="12" width="2" height="2" fill="#b9ae96"/></svg>
<svg style="left:387px;top:811px" width="12" height="13" viewBox="0 0 12 13"><path d="M1 0v13" stroke="#8a8a8a" stroke-width="1.600"/><path d="M11 .5L4.500 6.500L11 12.500" stroke="#8a8a8a" stroke-width="1.700" fill="none"/></svg>
<svg style="left:412px;top:811px" width="12" height="13" viewBox="0 0 12 13"><path d="M7.500 .5L1.500 6.500l6 6" stroke="#a0a0a0" stroke-width="1.700" fill="none"/></svg>
<svg style="left:437px;top:811px" width="12" height="13" viewBox="0 0 12 13"><path d="M1.500 .5l6 6l-6 6" stroke="#1e90dc" stroke-width="1.700" fill="none"/></svg>
<svg style="left:457px;top:811px" width="12" height="13" viewBox="0 0 12 13"><path d="M11 0v13" stroke="#1e90dc" stroke-width="1.600"/><path d="M1 .5L7.500 6.500L1 12.500" stroke="#1e90dc" stroke-width="1.700" fill="none"/></svg>
<svg style="left:479px;top:810.5px" width="14" height="14" viewBox="0 0 14 14"><path d="M1 4.500V1h3.500M9.500 1H13v3.500M13 9.500V13H9.500M4.500 13H1V9.500" stroke="#1e90dc" stroke-width="1.500" fill="none"/><rect x="4" y="4" width="6" height="6" fill="none" stroke="#1e90dc" stroke-width="1.300"/><rect x="5.800" y="5.800" width="2.400" height="2.400" fill="#1e90dc"/></svg>
<svg style="left:502.5px;top:810px" width="2" height="16" viewBox="0 0 2 16"><rect x="0" y="0" width="2" height="2" fill="#b9ae96"/><rect x="0" y="4" width="2" height="2" fill="#b9ae96"/><rect x="0" y="8" width="2" height="2" fill="#b9ae96"/><rect x="0" y="12" width="2" height="2" fill="#b9ae96"/></svg>
<svg style="left:516px;top:809.5px" width="14" height="15" viewBox="0 0 14 15"><path d="M7 10V1.500M3.500 5L7 1.500L10.500 5" stroke="#1e90dc" stroke-width="1.500" fill="none"/><path d="M1 9v5h12V9" stroke="#1e90dc" stroke-width="1.500" fill="none"/></svg>
<svg style="left:607px;top:816px" width="8" height="4" viewBox="0 0 8 4"><path d="M0 0h8 L4 4z" fill="#1a1a1a"/></svg>
<svg style="left:624.5px;top:810px" width="2" height="16" viewBox="0 0 2 16"><rect x="0" y="0" width="2" height="2" fill="#b9ae96"/><rect x="0" y="4" width="2" height="2" fill="#b9ae96"/><rect x="0" y="8" width="2" height="2" fill="#b9ae96"/><rect x="0" y="12" width="2" height="2" fill="#b9ae96"/></svg>
<svg style="left:631.5px;top:810px" width="15" height="15" viewBox="0 0 16 16"><path d="M15.29 6.75L15.29 9.25L13.69 9.57L13.13 10.91L14.04 12.27L12.27 14.04L10.91 13.13L9.57 13.69L9.25 15.29L6.75 15.29L6.43 13.69L5.09 13.13L3.73 14.04L1.96 12.27L2.87 10.91L2.31 9.57L0.71 9.25L0.71 6.75L2.31 6.43L2.87 5.09L1.96 3.73L3.73 1.96L5.09 2.87L6.43 2.31L6.75 0.71L9.25 0.71L9.57 2.31L10.91 2.87L12.27 1.96L14.04 3.73L13.13 5.09L13.69 6.43z" fill="#1e90dc"/><path d="M8 5.200L10.800 8L8 10.800L5.200 8z" fill="#7fd0f5"/></svg>
<div class="a " style="left:654px;top:806px;width:54px;height:23px;background:#fff;border:1px solid #8f8f8f;"></div>
<svg style="left:715px;top:809.5px" width="14" height="15" viewBox="0 0 14 15"><path d="M1 1h12M3 3.500l4 4.500l4-4.500" stroke="#1e90dc" stroke-width="1.400" fill="none"/><path d="M1 9v5h12V9" stroke="#1e90dc" stroke-width="1.400" fill="none"/></svg>
<svg style="left:775.5px;top:810px" width="2" height="16" viewBox="0 0 2 16"><rect x="0" y="0" width="2" height="2" fill="#b9ae96"/><rect x="0" y="4" width="2" height="2" fill="#b9ae96"/><rect x="0" y="8" width="2" height="2" fill="#b9ae96"/><rect x="0" y="12" width="2" height="2" fill="#b9ae96"/></svg>
<div class="a " style="left:0px;top:834px;width:1600px;height:26px;background:#f5f5f5;"></div>
<div class="a " style="left:778px;top:834px;width:1px;height:24px;background:#c6c6c6;"></div>
<div class="a " style="left:815px;top:834px;width:1px;height:24px;background:#c6c6c6;"></div>
<div class="a " style="left:841px;top:834px;width:1px;height:24px;background:#c6c6c6;"></div>
<div class="a " style="left:975px;top:834px;width:1px;height:24px;background:#c6c6c6;"></div>
<div class="a " style="left:1103px;top:834px;width:1px;height:24px;background:#c6c6c6;"></div>
<div class="a " style="left:1231px;top:834px;width:1px;height:24px;background:#c6c6c6;"></div>
<svg style="left:1315px;top:841.5px" width="2" height="12" viewBox="0 0 2 12"><rect x="0" y="0" width="2" height="2" fill="#a8a8a8"/><rect x="0" y="4" width="2" height="2" fill="#a8a8a8"/><rect x="0" y="8" width="2" height="2" fill="#a8a8a8"/></svg>
<div class="a " style="left:0px;top:860px;width:1600px;height:40px;background:#000;"></div>
<div class="a " style="left:294px;top:860px;width:48px;height:40px;background:#2e2e2e;"></div>
<div class="a " style="left:294px;top:898px;width:48px;height:2px;background:#76b9ed;"></div>
<svg style="left:16px;top:872px" width="16" height="16" viewBox="0 0 16 16"><path d="M0 2.300L6.600 1.400V7.600H0zM7.400 1.300L16 0V7.600H7.400zM0 8.400h6.600v6.200L0 13.700zM7.400 8.400H16V16l-8.600-1.200z" fill="#fff"/></svg>
<svg style="left:63px;top:871px" width="18" height="18" viewBox="0 0 18 18"><circle cx="11" cy="7" r="5.700" fill="none" stroke="#fff" stroke-width="1.500"/><path d="M7 11L.8 17.200" stroke="#fff" stroke-width="1.600"/></svg>
<svg style="left:112px;top:872px" width="17" height="16" viewBox="0 0 17 16"><path d="M.5 0v1.500h11V0M.5 15v-2.500h11V15" stroke="#fff" stroke-width="1" fill="none"/><rect x=".5" y="4.500" width="11" height="6" fill="none" stroke="#fff" stroke-width="1"/><path d="M14.500 0v4M14.500 7.500v7.500" stroke="#fff" stroke-width="1"/><rect x="13" y="4" width="3" height="3" fill="#fff"/></svg>
<svg style="left:159px;top:867px" width="24" height="24" viewBox="0 0 24 24"><defs><linearGradient id="ieg" x1="0" y1="0" x2="1" y2="1"><stop offset="0" stop-color="#7fe3ff"/><stop offset=".55" stop-color="#25b4ee"/><stop offset="1" stop-color="#1388d6"/></linearGradient></defs><path d="M13 3.800a9 9 0 1 0 8.500 12h-4.700a4.600 4.600 0 0 1-8.300-1.600h13.400c.9-5.700-3.300-10.400-8.900-10.400zM8.600 11.200a4.500 4.500 0 0 1 8.700 0z" fill="url(#ieg)"/><path d="M2.300 22.200C-.8 17.500 7.500 7 16.500 3.200C21 1.400 23.600 2.300 22 6.800C22.300 3.900 19.500 3.800 16.500 5.200C10 8.300 3.800 16.500 3.600 20.300c-.1 1.900 1.700 2.200 4.200 1.200C5.600 23.300 3.300 23.600 2.300 22.200z" fill="#f5c211"/></svg>
<svg style="left:209px;top:870.5px" width="22" height="18" viewBox="0 0 22 18"><path d="M0 1.200h8l1.500 1.600H21.500V17H0z" fill="#ffe896"/><path d="M0 1.200h8l1.500 1.600H0z" fill="#e9b64a"/><path d="M1.500 1.900h5.500" stroke="#fff5cf" stroke-width=".9"/><path d="M3.800 10.300h14v7.700h-3.900v-3.700h-6.200v3.700h-3.900z" fill="#2ba4e9"/></svg>
<svg style="left:257.2px;top:868.2px" width="24" height="24" viewBox="0 0 24 24"><circle cx="12" cy="12" r="11" fill="#fff" stroke="#4dc8d2" stroke-width="2.100"/><path d="M3.600 8.600c.8-.9 2-.8 2.500-.2c-.9 1.200-1.300 2.400-1.700 3.700c-.3 1.300-.6 2.500-1.200 3.500c0-1.500.5-2.900.6-4.200c.1-1-.1-1.900-.2-2.800z" fill="#3b2d27"/><path d="M6.800 6.900L10.300 4.100" stroke="#8a807a" stroke-width=".5"/><circle cx="10.300" cy="7.200" r=".85" fill="#3b2d27"/><path d="M14 7.400c1.200-.8 2.900-.9 4-.3c-.3 1.300-1.300 2.500-2.500 2.600c-.9-.3-1.500-1.300-1.500-2.300z" fill="#3b2d27"/><path d="M16.200 11.800l.9 2.300l1.300-2.200c.3 1.400 0 3-.9 4.200l-.7-.4z" fill="#3b2d27"/><path d="M10.300 13.100c1.300.8 2.600 1.400 3.900 1.800l2.200 1l1.400 4.300c-1.600 1-3.300 1.500-5 1.400c-1.700-.1-3.300-.5-4.600-1z" fill="#3b2d27"/><circle cx="15.300" cy="16.400" r=".75" fill="#fff"/></svg>
<svg style="left:306px;top:868.2px" width="24" height="24" viewBox="0 0 24 24"><circle cx="12" cy="12" r="11" fill="#fff" stroke="#4dc8d2" stroke-width="2.100"/><path d="M3.600 8.600c.8-.9 2-.8 2.500-.2c-.9 1.200-1.300 2.400-1.700 3.700c-.3 1.300-.6 2.500-1.200 3.500c0-1.500.5-2.900.6-4.200c.1-1-.1-1.900-.2-2.800z" fill="#3b2d27"/><path d="M6.800 6.900L10.300 4.100" stroke="#8a807a" stroke-width=".5"/><circle cx="10.300" cy="7.200" r=".85" fill="#3b2d27"/><path d="M14 7.400c1.200-.8 2.900-.9 4-.3c-.3 1.300-1.300 2.500-2.500 2.600c-.9-.3-1.500-1.300-1.500-2.300z" fill="#3b2d27"/><path d="M16.200 11.800l.9 2.300l1.300-2.200c.3 1.400 0 3-.9 4.200l-.7-.4z" fill="#3b2d27"/><path d="M10.300 13.100c1.300.8 2.600 1.400 3.900 1.800l2.200 1l1.400 4.300c-1.600 1-3.300 1.500-5 1.400c-1.700-.1-3.300-.5-4.600-1z" fill="#3b2d27"/><circle cx="15.300" cy="16.400" r=".75" fill="#fff"/></svg>
<svg style="left:1347.5px;top:876px" width="13" height="8" viewBox="0 0 13 8"><path d="M1 7L6.500 1.500L12 7" stroke="#fff" stroke-width="1.300" fill="none"/></svg>
<svg style="left:1372px;top:871.5px" width="15" height="17" viewBox="0 0 15 17"><rect x="1.500" y="4.500" width="6.500" height="11" rx="1.300" fill="none" stroke="#fff" stroke-width="1.100"/><rect x="2.700" y="1" width="4.100" height="3.500" fill="none" stroke="#fff" stroke-width="1"/><rect x="4" y="2.200" width="1.500" height="1.200" fill="#fff"/><rect x="6.500" y="11" width="8" height="6" fill="#000"/><path d="M8 14l1.800 1.800l4-4.300" stroke="#c8c8c8" stroke-width="1.100" fill="none"/></svg>
<svg style="left:1393.5px;top:872.5px" width="17" height="16" viewBox="0 0 17 16"><rect x="3.500" y="1.500" width="12.500" height="9" fill="none" stroke="#fff" stroke-width="1.100"/><path d="M9.800 10.500v3.500M6 14.500h7.500" stroke="#fff" stroke-width="1.100"/><rect x=".6" y="1" width="4.600" height="4.600" fill="#000" stroke="#fff" stroke-width="1"/><path d="M1.700 3l1 1l1.500-1.700" stroke="#fff" stroke-width=".8" fill="none"/><path d="M2.900 5.600V14.500H6" stroke="#fff" stroke-width="1.100" fill="none"/></svg>
<svg style="left:1418px;top:873px" width="17" height="14" viewBox="0 0 17 14"><path d="M.7 4.800h3L7.500 1.200v11.600L3.700 9.200h-3z" fill="none" stroke="#fff" stroke-width="1.100"/><path d="M9.500 4.500c1 1.300 1 3.700 0 5M11.800 2.800c2 2.500 2 6 0 8.400M14 1c3 3.500 3 8.500 0 12" stroke="#fff" stroke-width="1" fill="none"/></svg>
<svg style="left:1558.5px;top:871.2px" width="26" height="24" viewBox="0 0 26 24"><path d="M1 1h15.500v12.500H6.500L2.800 16.800V13.500H1z" fill="#fff"/><path d="M3.500 4.300h10.500M3.500 7.200h10.500M3.500 10h10.500" stroke="#000" stroke-width="1.200"/><circle cx="16" cy="16.300" r="8" fill="#000"/><circle cx="16" cy="16.300" r="6.900" fill="#404040"/></svg>
<div class="a " style="left:1595px;top:860px;width:1px;height:40px;background:#555;"></div>
<svg class="wmk" style="left:0;top:75px" width="1600" height="785" viewBox="0 75 1600 785"><g font-family="'Liberation Sans','Noto Sans CJK SC',sans-serif" font-size="21" fill="#b0b0b0" fill-opacity="0.27">
<text x="-213.8" y="219.5" textLength="189" transform="rotate(-44 -213.8 219.5)">audit审计01(Audit1)</text>
<text x="-200.5" y="241.8" textLength="199" transform="rotate(-45 -200.5 241.8)">audit-172.18.210.237</text>
<text x="86.2" y="219.5" textLength="189" transform="rotate(-44 86.2 219.5)">audit审计01(Audit1)</text>
<text x="99.5" y="241.8" textLength="199" transform="rotate(-45 99.5 241.8)">audit-172.18.210.237</text>
<text x="386.2" y="219.5" textLength="189" transform="rotate(-44 386.2 219.5)">audit审计01(Audit1)</text>
<text x="399.5" y="241.8" textLength="199" transform="rotate(-45 399.5 241.8)">audit-172.18.210.237</text>
<text x="686.2" y="219.5" textLength="189" transform="rotate(-44 686.2 219.5)">audit审计01(Audit1)</text>
<text x="699.5" y="241.8" textLength="199" transform="rotate(-45 699.5 241.8)">audit-172.18.210.237</text>
<text x="986.2" y="219.5" textLength="189" transform="rotate(-44 986.2 219.5)">audit审计01(Audit1)</text>
<text x="999.5" y="241.8" textLength="199" transform="rotate(-45 999.5 241.8)">audit-172.18.210.237</text>
<text x="1286.2" y="219.5" textLength="189" transform="rotate(-44 1286.2 219.5)">audit审计01(Audit1)</text>
<text x="1299.5" y="241.8" textLength="199" transform="rotate(-45 1299.5 241.8)">audit-172.18.210.237</text>
<text x="1586.2" y="219.5" textLength="189" transform="rotate(-44 1586.2 219.5)">audit审计01(Audit1)</text>
<text x="1599.5" y="241.8" textLength="199" transform="rotate(-45 1599.5 241.8)">audit-172.18.210.237</text>
<text x="-213.8" y="519.5" textLength="189" transform="rotate(-44 -213.8 519.5)">audit审计01(Audit1)</text>
<text x="-200.5" y="541.8" textLength="199" transform="rotate(-45 -200.5 541.8)">audit-172.18.210.237</text>
<text x="86.2" y="519.5" textLength="189" transform="rotate(-44 86.2 519.5)">audit审计01(Audit1)</text>
<text x="99.5" y="541.8" textLength="199" transform="rotate(-45 99.5 541.8)">audit-172.18.210.237</text>
<text x="386.2" y="519.5" textLength="189" transform="rotate(-44 386.2 519.5)">audit审计01(Audit1)</text>
<text x="399.5" y="541.8" textLength="199" transform="rotate(-45 399.5 541.8)">audit-172.18.210.237</text>
<text x="686.2" y="519.5" textLength="189" transform="rotate(-44 686.2 519.5)">audit审计01(Audit1)</text>
<text x="699.5" y="541.8" textLength="199" transform="rotate(-45 699.5 541.8)">audit-172.18.210.237</text>
<text x="986.2" y="519.5" textLength="189" transform="rotate(-44 986.2 519.5)">audit审计01(Audit1)</text>
<text x="999.5" y="541.8" textLength="199" transform="rotate(-45 999.5 541.8)">audit-172.18.210.237</text>
<text x="1286.2" y="519.5" textLength="189" transform="rotate(-44 1286.2 519.5)">audit审计01(Audit1)</text>
<text x="1299.5" y="541.8" textLength="199" transform="rotate(-45 1299.5 541.8)">audit-172.18.210.237</text>
<text x="1586.2" y="519.5" textLength="189" transform="rotate(-44 1586.2 519.5)">audit审计01(Audit1)</text>
<text x="1599.5" y="541.8" textLength="199" transform="rotate(-45 1599.5 541.8)">audit-172.18.210.237</text>
<text x="-213.8" y="819.5" textLength="189" transform="rotate(-44 -213.8 819.5)">audit审计01(Audit1)</text>
<text x="-200.5" y="841.8" textLength="199" transform="rotate(-45 -200.5 841.8)">audit-172.18.210.237</text>
<text x="86.2" y="819.5" textLength="189" transform="rotate(-44 86.2 819.5)">audit审计01(Audit1)</text>
<text x="99.5" y="841.8" textLength="199" transform="rotate(-45 99.5 841.8)">audit-172.18.210.237</text>
<text x="386.2" y="819.5" textLength="189" transform="rotate(-44 386.2 819.5)">audit审计01(Audit1)</text>
<text x="399.5" y="841.8" textLength="199" transform="rotate(-45 399.5 841.8)">audit-172.18.210.237</text>
<text x="686.2" y="819.5" textLength="189" transform="rotate(-44 686.2 819.5)">audit审计01(Audit1)</text>
<text x="699.5" y="841.8" textLength="199" transform="rotate(-45 699.5 841.8)">audit-172.18.210.237</text>
<text x="986.2" y="819.5" textLength="189" transform="rotate(-44 986.2 819.5)">audit审计01(Audit1)</text>
<text x="999.5" y="841.8" textLength="199" transform="rotate(-45 999.5 841.8)">audit-172.18.210.237</text>
<text x="1286.2" y="819.5" textLength="189" transform="rotate(-44 1286.2 819.5)">audit审计01(Audit1)</text>
<text x="1299.5" y="841.8" textLength="199" transform="rotate(-45 1299.5 841.8)">audit-172.18.210.237</text>
<text x="1586.2" y="819.5" textLength="189" transform="rotate(-44 1586.2 819.5)">audit审计01(Audit1)</text>
<text x="1599.5" y="841.8" textLength="199" transform="rotate(-45 1599.5 841.8)">audit-172.18.210.237</text>
</g></svg>
<div class="t" style="top:4.00px;left:23.7px;letter-spacing:0.41px;">DBeaver 22.3.4 - &lt;audit_bi_pro&gt; analysis.sql</div><div class="t" style="top:25.00px;left:7px;letter-spacing:-0.37px;">文件(F)</div><div class="t" style="top:25.00px;left:58.5px;letter-spacing:-0.20px;">编辑(E)</div><div class="t" style="top:25.00px;left:111.5px;letter-spacing:0.27px;">导航(N)</div><div class="t" style="top:25.00px;left:168px;letter-spacing:-0.10px;">搜索(A)</div><div class="t" style="top:25.00px;left:222px;letter-spacing:0.01px;">SQL 编辑器</div><div class="t" style="top:25.00px;left:299px;letter-spacing:-0.03px;">数据库(D)</div><div class="t" style="top:25.00px;left:366px;letter-spacing:0.13px;">窗口(W)</div><div class="t" style="top:25.00px;left:424px;letter-spacing:0.07px;">帮助(H)</div><div class="t" style="top:51.00px;left:167.5px;letter-spacing:-0.67px;">SQL</div><div class="t" style="top:51.00px;left:245px;color:#a3a3a3;">提交</div><div class="t" style="top:51.00px;left:300.5px;color:#a3a3a3;">回滚</div><div class="t" style="top:51.00px;left:430.3px;letter-spacing:0.33px;">Auto</div><div class="t" style="top:51.00px;left:552.5px;letter-spacing:0.33px;">audit_bi_pro</div><div class="t" style="top:51.00px;left:677.3px;letter-spacing:0.33px;">audit_bi_pro</div><div class="t" style="top:80.50px;left:48.5px;letter-spacing:0.43px;">&lt;audit_bi_pro&gt; analysis.sql</div><div class="t" style="top:80.50px;left:257px;letter-spacing:0.38px;">&lt;audit_bi_pro&gt; analysis_cleartime.sql</div><div class="t" style="top:536.00px;left:48.3px;">t1 1</div><div class="t" style="top:561.50px;left:49.5px;color:#128a12;letter-spacing:0.10px;">SELECT t1.store_code AS "店铺编码", t1.store_name_t_t AS "店铺:</div><div class="t" style="top:561.50px;left:445px;color:#a8a8a8;font-style:italic;letter-spacing:0.16px;">输入一个 SQL 表达式来过滤结果 (使用 Ctrl+Space)</div><div class="t" style="top:590.00px;left:85px;font-size:9.5px;color:#0f86d6;font-weight:700;transform:scaleX(.8);transform-origin:0 0;-webkit-text-stroke:.3px #0f86d6;">ABC</div><div class="t" style="top:591.00px;left:103.5px;">店铺编码</div><div class="t" style="top:590.00px;left:197px;font-size:9.5px;color:#0f86d6;font-weight:700;transform:scaleX(.8);transform-origin:0 0;-webkit-text-stroke:.3px #0f86d6;">ABC</div><div class="t" style="top:591.00px;left:216px;">店铺名称</div><div class="t" style="top:590.00px;left:424.5px;font-size:10px;color:#0f86d6;letter-spacing:-0.06px;">123</div><div class="t" style="top:591.00px;left:444px;letter-spacing:0.11px;">2024年618销售金额（元）（包含运费）</div><div class="t" style="top:590.00px;left:705.5px;font-size:10px;color:#0f86d6;letter-spacing:-0.06px;">123</div><div class="t" style="top:591.00px;left:725px;letter-spacing:0.19px;">2024年618订单数量</div><div class="t" style="top:590.00px;left:879px;font-size:10px;color:#0f86d6;letter-spacing:-0.06px;">123</div><div class="t" style="top:591.00px;left:898px;letter-spacing:0.14px;">2024年双11销售金额（元）（包含运费）</div><div class="t" style="top:590.00px;left:1164.5px;font-size:10px;color:#0f86d6;letter-spacing:-0.06px;">123</div><div class="t" style="top:591.00px;left:1184px;letter-spacing:0.24px;">2024年双11订单数量</div><div class="t" style="top:590.00px;left:1342.5px;font-size:10px;color:#0f86d6;letter-spacing:-0.06px;">123</div><div class="t" style="top:591.00px;left:1362.3px;width:194.7px;overflow:hidden;letter-spacing:0.07px;">2024年总销售金额（元）（包含运费）</div><div class="t" style="top:615.00px;left:53.5px;">1</div><div class="t" style="top:615.00px;left:84.5px;color:#fff;">DHF3</div><div class="t" style="top:615.00px;left:196px;">海澜之家天猫官方旗舰店</div><div class="t" style="top:615.00px;left:606.5px;letter-spacing:0.18px;">204,391,962.72</div><div class="t" style="top:615.00px;left:811px;letter-spacing:0.18px;">1,393,106</div><div class="t" style="top:615.00px;left:1066px;letter-spacing:0.18px;">135,379,513.09</div><div class="t" style="top:615.00px;left:1285px;letter-spacing:0.23px;">431,104</div><div class="t" style="top:615.00px;left:1507px;width:50px;overflow:hidden;letter-spacing:0.13px;">1,087,676,</div><div class="t" style="top:636.00px;left:53.5px;">2</div><div class="t" style="top:636.00px;left:84.5px;">DHE9</div><div class="t" style="top:636.00px;left:196px;">海澜之家抖音官方旗舰店</div><div class="t" style="top:636.00px;left:606.5px;letter-spacing:0.25px;">114,850,256.91</div><div class="t" style="top:636.00px;left:811px;letter-spacing:0.18px;">1,189,510</div><div class="t" style="top:636.00px;left:1073px;letter-spacing:0.17px;">22,296,384.72</div><div class="t" style="top:636.00px;left:1292px;letter-spacing:0.22px;">87,715</div><div class="t" style="top:636.00px;left:1523.3px;width:33.7px;overflow:hidden;letter-spacing:0.16px;">363,385,</div><div class="t" style="top:657.00px;left:53.5px;">3</div><div class="t" style="top:657.00px;left:84.5px;">DHA5</div><div class="t" style="top:657.00px;left:196px;">海澜之家京东官方旗舰店</div><div class="t" style="top:657.00px;left:613.5px;letter-spacing:0.17px;">46,902,683.23</div><div class="t" style="top:657.00px;left:821px;letter-spacing:0.23px;">306,472</div><div class="t" style="top:657.00px;left:1073px;letter-spacing:0.17px;">50,606,451.66</div><div class="t" style="top:657.00px;left:1285px;letter-spacing:0.23px;">152,866</div><div class="t" style="top:657.00px;left:1516.7px;width:40.3px;overflow:hidden;letter-spacing:0.16px;">306,553,</div><div class="t" style="top:678.00px;left:53.5px;">4</div><div class="t" style="top:678.00px;left:84.5px;">DYB0</div><div class="t" style="top:678.00px;left:196px;">天猫-英氏官方旗舰店</div><div class="t" style="top:678.00px;left:613.5px;letter-spacing:0.17px;">27,629,981.67</div><div class="t" style="top:678.00px;left:821px;letter-spacing:0.23px;">157,180</div><div class="t" style="top:678.00px;left:1073px;letter-spacing:0.17px;">47,681,826.06</div><div class="t" style="top:678.00px;left:1285px;letter-spacing:0.36px;">228,211</div><div class="t" style="top:678.00px;left:1516.7px;width:40.3px;overflow:hidden;letter-spacing:0.16px;">237,530,</div><div class="t" style="top:699.00px;left:53.5px;">5</div><div class="t" style="top:699.00px;left:84.5px;">DHRN</div><div class="t" style="top:699.00px;left:196px;">海澜之家得物旗舰店</div><div class="t" style="top:699.00px;left:630.5px;letter-spacing:0.19px;">38,436,965</div><div class="t" style="top:699.00px;left:821px;letter-spacing:0.23px;">390,879</div><div class="t" style="top:699.00px;left:1097px;letter-spacing:0.18px;">6,654,934</div><div class="t" style="top:699.00px;left:1292px;letter-spacing:0.22px;">31,012</div><div class="t" style="top:699.00px;left:1516.7px;width:40.3px;overflow:hidden;letter-spacing:0.16px;">135,959,</div><div class="t" style="top:720.00px;left:53.5px;">6</div><div class="t" style="top:720.00px;left:84.5px;">K2061</div><div class="t" style="top:720.00px;left:196px;">分销【上海白阔供应链有限公司】的店铺</div><div class="t" style="top:720.00px;left:685.5px;letter-spacing:0.31px;">0</div><div class="t" style="top:720.00px;left:859px;letter-spacing:0.31px;">0</div><div class="t" style="top:720.00px;left:1145px;letter-spacing:0.31px;">0</div><div class="t" style="top:720.00px;left:1323px;letter-spacing:0.31px;">0</div><div class="t" style="top:720.00px;left:1516.7px;width:40.3px;overflow:hidden;letter-spacing:0.27px;">119,093,</div><div class="t" style="top:741.00px;left:53.5px;">7</div><div class="t" style="top:741.00px;left:84.5px;">DHFS</div><div class="t" style="top:741.00px;left:196px;">海澜之家抖音六十六号店</div><div class="t" style="top:741.00px;left:613.5px;letter-spacing:0.17px;">15,160,224.32</div><div class="t" style="top:741.00px;left:821px;letter-spacing:0.23px;">205,768</div><div class="t" style="top:741.00px;left:1097px;letter-spacing:0.18px;">2,222,982</div><div class="t" style="top:741.00px;left:1299px;letter-spacing:0.19px;">9,095</div><div class="t" style="top:741.00px;left:1523.3px;width:33.7px;overflow:hidden;letter-spacing:0.14px;">85,356,</div><div class="t" style="top:762.00px;left:53.5px;">8</div><div class="t" style="top:762.00px;left:84.5px;">DHEW</div><div class="t" style="top:762.00px;left:196px;">海澜之家抖音五十九号店</div><div class="t" style="top:762.00px;left:620.5px;letter-spacing:0.16px;">9,475,695.96</div><div class="t" style="top:762.00px;left:828px;letter-spacing:0.22px;">89,798</div><div class="t" style="top:762.00px;left:1090px;letter-spacing:0.19px;">17,952,881</div><div class="t" style="top:762.00px;left:1292px;letter-spacing:0.22px;">54,598</div><div class="t" style="top:762.00px;left:1523.3px;width:33.7px;overflow:hidden;letter-spacing:0.14px;">80,829,</div><div class="t" style="top:809.00px;left:79px;">刷新</div><div class="t" style="top:809.00px;left:165px;color:#a3a3a3;">保存</div><div class="t" style="top:809.00px;left:238px;color:#a3a3a3;">取消</div><div class="t" style="top:809.00px;left:536px;letter-spacing:-0.15px;">导出数据...</div><div class="t" style="top:809.00px;left:659px;letter-spacing:-0.18px;">200</div><div class="t" style="top:809.00px;left:737px;letter-spacing:0.19px;">1,073</div><div class="t" style="top:805.50px;left:805px;color:#555;letter-spacing:-0.34px;">...</div><div class="t" style="top:809.00px;left:822px;letter-spacing:0.30px;">200 行已获取 - 5.416s (5ms 获取), 2025-10-21 20:22:51</div><div class="t" style="top:837.00px;left:787px;letter-spacing:-1.00px;">CST</div><div class="t" style="top:837.00px;left:822px;letter-spacing:0.16px;">zh</div><div class="t" style="top:837.00px;left:849px;">可写</div><div class="t" style="top:837.00px;left:983px;">智能插入</div><div class="t" style="top:837.00px;left:1111px;letter-spacing:0.33px;">1590 : 1 : 66508</div><div class="t" style="top:837.00px;left:1239px;letter-spacing:0.18px;">Sel: 0 | 0</div><div class="t" style="top:872.00px;left:1443.5px;color:#fff;letter-spacing:-0.51px;">ENG</div><div class="t" style="top:863.00px;left:1495px;color:#fff;letter-spacing:0.19px;">20:22</div><div class="t" style="top:882.00px;left:1477.5px;color:#fff;letter-spacing:0.39px;">2025/10/21</div><div class="t" style="top:879.80px;left:1571px;color:#fff;font-weight:700;">1</div>
</body></html>
